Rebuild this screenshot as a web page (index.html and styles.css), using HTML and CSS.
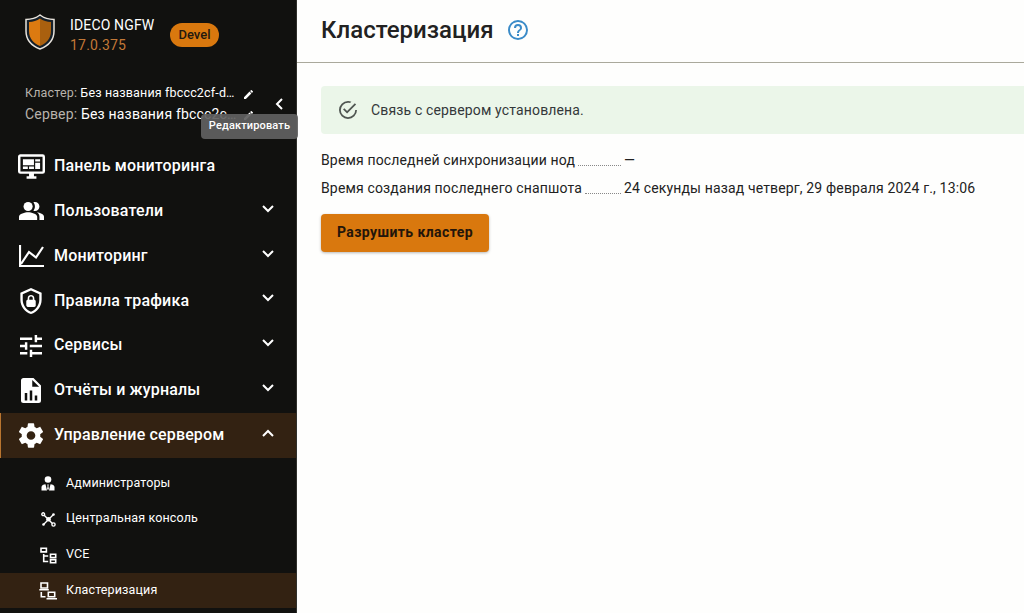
FILE: index.html
```html
<!DOCTYPE html>
<html lang="ru">
<head>
<meta charset="utf-8">
<title>Кластеризация</title>
<link rel="stylesheet" href="styles.css">
</head>
<body>
<div class="app">
  <aside class="sidebar">
    <header class="brand">
      <svg class="logo" width="30" height="36" viewBox="0 0 30 36"><path d="M15 1C11 4 6 5.500 1 5.500V17C1 26 7 32 15 35C23 32 29 26 29 17V5.500C24 5.500 19 4 15 1Z" fill="#15202a" stroke="#e8e3dc" stroke-width="1.500"/><path d="M15 4.500C12 6.700 8 8 4 8V17C4 24.500 9 29.500 15 32Z" fill="#dc7a10"/><path d="M15 4.500C18 6.700 22 8 26 8V17C26 24.500 21 29.500 15 32Z" fill="#a9600f"/></svg>
      <div class="product"><div class="product-name">IDECO NGFW</div><div class="version">17.0.375</div></div>
      <span class="badge">Devel</span>
    </header>
    <div class="names">
      <div class="name-row cluster"><span class="name"><span class="muted">Кластер:</span> Без названия fbccc2cf-d…</span><svg class="pencil" viewBox="3 3 18 18"><path d="M20.710 7.040c.39-.39.39-1.040 0-1.410l-2.340-2.340c-.37-.39-1.020-.39-1.410 0l-1.840 1.830 3.750 3.750M3 17.250V21h3.750L17.810 9.930l-3.750-3.750z"/></svg></div>
      <div class="name-row server"><span class="name"><span class="muted">Сервер:</span> Без названия fbccc2c…</span><svg class="pencil" viewBox="3 3 18 18"><path d="M20.710 7.040c.39-.39.39-1.040 0-1.410l-2.340-2.340c-.37-.39-1.020-.39-1.410 0l-1.840 1.830 3.750 3.750M3 17.250V21h3.750L17.810 9.930l-3.750-3.750z"/></svg></div>
      <svg class="collapse" viewBox="0 0 8 12"><path d="M7 1L2 6l5 5"/></svg>
      <div class="tooltip">Редактировать</div>
    </div>
    <nav class="menu">
      <a class="item"><span class="ico"><svg width="27" height="25" viewBox="1 2 22 20"><path d="M21 16V4H3v12h18m0-14a2 2 0 0 1 2 2v12a2 2 0 0 1-2 2h-7v2h2v2H8v-2h2v-2H3a2 2 0 0 1-2-2V4c0-1.110.89-2 2-2h18M5 6h9v5H5V6m10 0h4v2h-4V6m4 3v5h-4V9h4M5 12h4v2H5v-2m5 0h4v2h-4z"/></svg></span><span class="label">Панель мониторинга</span></a>
      <a class="item"><span class="ico"><svg width="25" height="18" viewBox="1 4 22 16" preserveAspectRatio="none"><path d="M16.670 13.130C18.040 14.060 19 15.320 19 17v3h4v-3c0-2.180-3.570-3.470-6.330-3.870zM15 12c2.210 0 4-1.790 4-4s-1.790-4-4-4c-.47 0-.91.1-1.330.24C14.500 5.270 15 6.580 15 8s-.5 2.730-1.330 3.760c.42.14.86.24 1.330.24zM9 13c-2.670 0-8 1.340-8 4v3h16v-3c0-2.660-5.330-4-8-4z"/><circle cx="9" cy="8" r="4"/></svg></span><span class="label">Пользователи</span><svg class="chev" viewBox="0 0 12 8"><path d="M1 1l5 5 5-5"/></svg></a>
      <a class="item"><span class="ico"><svg class="line" width="25" height="22" viewBox="0 0 25 22"><path d="M1 0v21h24M2 19l8-12 7 5.500L24 2" stroke-width="2.200"/></svg></span><span class="label">Мониторинг</span><svg class="chev" viewBox="0 0 12 8"><path d="M1 1l5 5 5-5"/></svg></a>
      <a class="item"><span class="ico"><svg width="22" height="26" viewBox="3 1 18 22"><path d="M21 11c0 5.550-3.840 10.740-9 12-5.160-1.260-9-6.450-9-12V5l9-4 9 4v6m-9 10c3.750-1 7-5.460 7-9.780V6.300l-7-3.120L5 6.300v4.920C5 15.540 8.250 20 12 21m2.800-10V9.500C14.800 8.100 13.400 7 12 7S9.200 8.100 9.200 9.500V11c-.6 0-1.200.6-1.200 1.200v3.500c0 .7.600 1.300 1.200 1.300h5.500c.7 0 1.300-.6 1.300-1.200v-3.500c0-.7-.6-1.300-1.200-1.300m-1.300 0h-3V9.500c0-.8.700-1.300 1.500-1.300s1.500.5 1.500 1.300z"/></svg></span><span class="label">Правила трафика</span><svg class="chev" viewBox="0 0 12 8"><path d="M1 1l5 5 5-5"/></svg></a>
      <a class="item"><span class="ico"><svg width="22" height="22" viewBox="3 3 18 18"><path d="M3 17v2h6v-2H3M3 5v2h10V5H3m10 16v-2h8v-2h-8v-2h-2v6h2M7 9v2H3v2h4v2h2V9H7m14 4v-2H11v2h10m-6-4h2V7h4V5h-4V3h-2z"/></svg></span><span class="label">Сервисы</span><svg class="chev" viewBox="0 0 12 8"><path d="M1 1l5 5 5-5"/></svg></a>
      <a class="item"><span class="ico"><svg width="20" height="25" viewBox="4 2 16 20"><path d="M13 9h5.500L13 3.500V9M6 2h8l6 6v12a2 2 0 0 1-2 2H6a2 2 0 0 1-2-2V4c0-1.110.89-2 2-2m1 18h2v-6H7v6m4 0h2v-8h-2v8m4 0h2v-4h-2z"/></svg></span><span class="label">Отчёты и журналы</span><svg class="chev" viewBox="0 0 12 8"><path d="M1 1l5 5 5-5"/></svg></a>
      <a class="item active"><span class="ico"><svg width="24" height="25" viewBox="2.300 2 19.400 20"><path d="M12 15.500A3.500 3.500 0 0 1 8.500 12 3.500 3.500 0 0 1 12 8.500a3.500 3.500 0 0 1 3.500 3.500 3.500 3.500 0 0 1-3.500 3.500m7.430-2.530c.04-.32.07-.64.07-.97s-.03-.66-.07-1l2.110-1.630c.19-.15.24-.42.12-.64l-2-3.460c-.12-.22-.39-.31-.61-.22l-2.490 1c-.52-.39-1.060-.73-1.690-.98l-.37-2.650A.506.506 0 0 0 14 2h-4c-.25 0-.46.18-.5.420l-.37 2.650c-.63.25-1.170.59-1.690.98l-2.490-1c-.22-.09-.49 0-.61.22l-2 3.460c-.13.22-.07.49.12.640L4.570 11c-.04.34-.07.67-.07 1s.03.650.07.970l-2.110 1.660c-.19.150-.25.420-.12.640l2 3.460c.12.220.39.300.61.220l2.490-1.010c.52.400 1.060.740 1.690.990l.37 2.650c.04.240.25.420.5.420h4c.25 0 .46-.18.5-.42l.37-2.650c.63-.26 1.170-.59 1.690-.99l2.490 1.010c.22.080.49 0 .61-.22l2-3.460c.12-.22.07-.49-.12-.64z"/></svg></span><span class="label">Управление сервером</span><svg class="chev up" viewBox="0 0 12 8"><path d="M1 1l5 5 5-5"/></svg></a>
    </nav>
    <nav class="submenu">
      <a class="sub"><span class="sico"><svg width="14" height="15" viewBox="0 0 14 15"><circle cx="7" cy="3.500" r="3.300"/><path d="M4.500 8.300L6 14.500H.5V11C.5 9.400 2.500 8.600 4.500 8.300M9.500 8.300L8 14.500h5.500V11c0-1.600-2-2.400-4-2.700M6.200 8.500h1.600l-.4 1.500.5 3-.9 1-.9-1 .5-3z"/></svg></span><span>Администраторы</span></a>
      <a class="sub"><span class="sico"><svg width="15" height="15" viewBox="0 0 15 15"><g fill="none" stroke="currentColor" stroke-width="1.400"><circle cx="2.200" cy="2.200" r="1.400"/><circle cx="12.500" cy="12.500" r="1.600"/><path d="M3.200 3.200l8.200 8.200M12.500 2.500l-10 10"/></g><circle cx="7.500" cy="7.300" r="2.300"/><circle cx="12.500" cy="2.500" r="1.300"/><circle cx="2.500" cy="12.500" r="1.300"/></svg></span><span>Центральная консоль</span></a>
      <a class="sub"><span class="sico"><svg class="line" width="17" height="17" viewBox="0 0 17 17"><path d="M1 1.300h5.400v3.600H1zM10.500 7.300h5.200v3.200h-5.200zM10.500 12.600h5.200v3.200h-5.200zM3.700 7v7.500h4.500M3.700 9h4.500"/></svg></span><span>VCE</span></a>
      <a class="sub active"><span class="sico"><svg class="line" width="18" height="18" viewBox="0 0 18 18"><path d="M2 1h6.500v5H2zM.3 7.700h9.500M9.300 10.200h6.400v4.500H9.300zM7.500 16.700H18M2.300 10v4.700h4.200"/></svg></span><span>Кластеризация</span></a>
    </nav>
  </aside>
  <main class="content">
    <header class="title-bar"><h1>Кластеризация</h1><svg class="help" viewBox="2 2 20 20"><path d="M11 18h2v-2h-2v2m1-16A10 10 0 0 0 2 12a10 10 0 0 0 10 10 10 10 0 0 0 10-10A10 10 0 0 0 12 2m0 18c-4.410 0-8-3.590-8-8s3.590-8 8-8 8 3.590 8 8-3.590 8-8 8m0-14a4 4 0 0 0-4 4h2a2 2 0 0 1 2-2 2 2 0 0 1 2 2c0 2-3 1.750-3 5h2c0-2.250 3-2.500 3-5a4 4 0 0 0-4-4z"/></svg></header>
    <section class="body">
      <div class="alert"><svg class="check" viewBox="2 2 20 20"><path d="M20 12a8 8 0 0 1-8 8 8 8 0 0 1-8-8 8 8 0 0 1 8-8c.76 0 1.500.110 2.200.310l1.570-1.570A9.820 9.820 0 0 0 12 2 10 10 0 0 0 2 12a10 10 0 0 0 10 10 10 10 0 0 0 10-10M7.910 10.080L6.500 11.500 11 16 21 6l-1.410-1.420L11 13.170z"/></svg><span>Связь с сервером установлена.</span></div>
      <dl class="facts">
        <div class="fact"><dt><span>Время последней синхронизации нод</span><i class="dots"></i></dt><dd>—</dd></div>
        <div class="fact"><dt><span>Время создания последнего снапшота</span><i class="dots"></i></dt><dd>24 секунды назад четверг, 29 февраля 2024 г., 13:06</dd></div>
      </dl>
      <button class="destroy">Разрушить кластер</button>
    </section>
  </main>
</div>
</body>
</html>
```
FILE: styles.css
```css
* { box-sizing: border-box; }
body { margin: 0; font-family: Roboto, sans-serif; background: #fefefd; color: #222; }
svg { display: block; flex: none; fill: currentColor; }
svg.line { fill: none; stroke: currentColor; stroke-width: 1.6; }
.app { display: flex; width: 1024px; height: 613px; overflow: hidden; }
.sidebar { width: 297px; flex: none; background: #11110f; color: #fff; display: flex; flex-direction: column; border-right: 1px solid #30302c; }
.brand { height: 82px; padding: 14px 0 0 25px; display: flex; align-items: flex-start; }
.logo { margin-top: -.5px; }
.product { margin-left: 15px; width: 100px; margin-top: 1px; font-size: 14px; line-height: 20px; white-space: nowrap; letter-spacing: .15px; }
.version { color: #c37837; letter-spacing: .2px; }
.badge { margin-top: 9px; width: 49px; height: 24px; border-radius: 12px; background: #d9780e; color: #23190e; font-size: 13px; font-weight: 500; line-height: 23px; text-align: center; }
.names { position: relative; height: 62px; padding: 0 0 0 25px; }
.name-row { display: flex; height: 22px; line-height: 22px; align-items: center; white-space: nowrap; letter-spacing: .16px; }
.name { width: 219px; }
.cluster { font-size: 12.5px; }
.server { height: 20px; font-size: 14px; letter-spacing: .18px; }
.muted { color: #b8b3ac; }
.pencil { width: 9px; height: 9px; margin-top: 2px; }
.collapse { position: absolute; left: 275px; top: 16px; width: 8px; height: 12px; fill: none; stroke: #fff; stroke-width: 2; }
.tooltip { position: absolute; left: 201px; top: 32px; width: 97px; height: 25px; border-radius: 4px; background: rgba(97, 97, 97, .92); font-size: 11px; font-weight: 500; line-height: 23px; text-align: center; white-space: nowrap; letter-spacing: .15px; z-index: 2; }
.menu { margin-top: .2px; }
.item { display: flex; align-items: center; height: 44.8px; padding: 0 22px 0 17px; font-size: 16px; font-weight: 500; white-space: nowrap; letter-spacing: .16px; }
.item.active { background: #332212; border-left: 1px solid #b9752f; padding-left: 16px; }
.ico { width: 28px; display: flex; justify-content: center; margin-right: 9px; }
.label { flex: 1; padding-bottom: 1.6px; }
.chev { width: 12px; height: 8px; fill: none; stroke: #fff; stroke-width: 2; margin-bottom: 5px; }
.chev.up { transform: scaleY(-1); }
.submenu { margin-top: 7.5px; }
.sub { display: flex; align-items: center; height: 35.8px; font-size: 12.5px; padding-left: 39px; white-space: nowrap; letter-spacing: .14px; }
.sub.active { background: #332212; }
.sub > span:last-child { padding-bottom: 2px; }
.sico { width: 18px; display: flex; justify-content: center; margin-right: 9px; padding-top: 1px; }
.content { flex: 1; min-width: 0; }
.title-bar { height: 63px; border-bottom: 1px solid #aaa99c; padding: 0 0 3px 24px; display: flex; align-items: center; }
h1 { margin: 0; width: 187px; font-size: 24px; font-weight: 500; line-height: 30px; white-space: nowrap; }
.help { width: 20px; height: 20px; color: #3b8bc8; }
.body { padding: 23px 0 0 24px; }
.alert { height: 48px; background: #ebf6e9; border-radius: 4px 0 0 4px; display: flex; align-items: center; padding-left: 18px; gap: 14px; font-size: 14px; letter-spacing: .15px; color: #34383a; }
.alert span { white-space: nowrap; }
.check { width: 18px; height: 18px; color: #505652; }
.facts { margin: 12px 0 0; font-size: 14px; line-height: 28px; letter-spacing: .15px; }
.fact { display: flex; height: 28px; white-space: nowrap; }
dt { width: 300px; display: flex; gap: 3px; }
.dots { flex: 1; height: 20px; border-bottom: 1px dotted #888; }
dd { margin: 0 0 0 3px; }
.destroy { display: block; margin-top: 12px; width: 168px; height: 38px; padding: 0; border: 0; border-radius: 4px; background: #d9780e; color: #23150a; font: 700 14px/36px Roboto, sans-serif; letter-spacing: .4px; padding-bottom: 2px; box-shadow: 0 1px 3px rgba(0, 0, 0, .28); }
```
